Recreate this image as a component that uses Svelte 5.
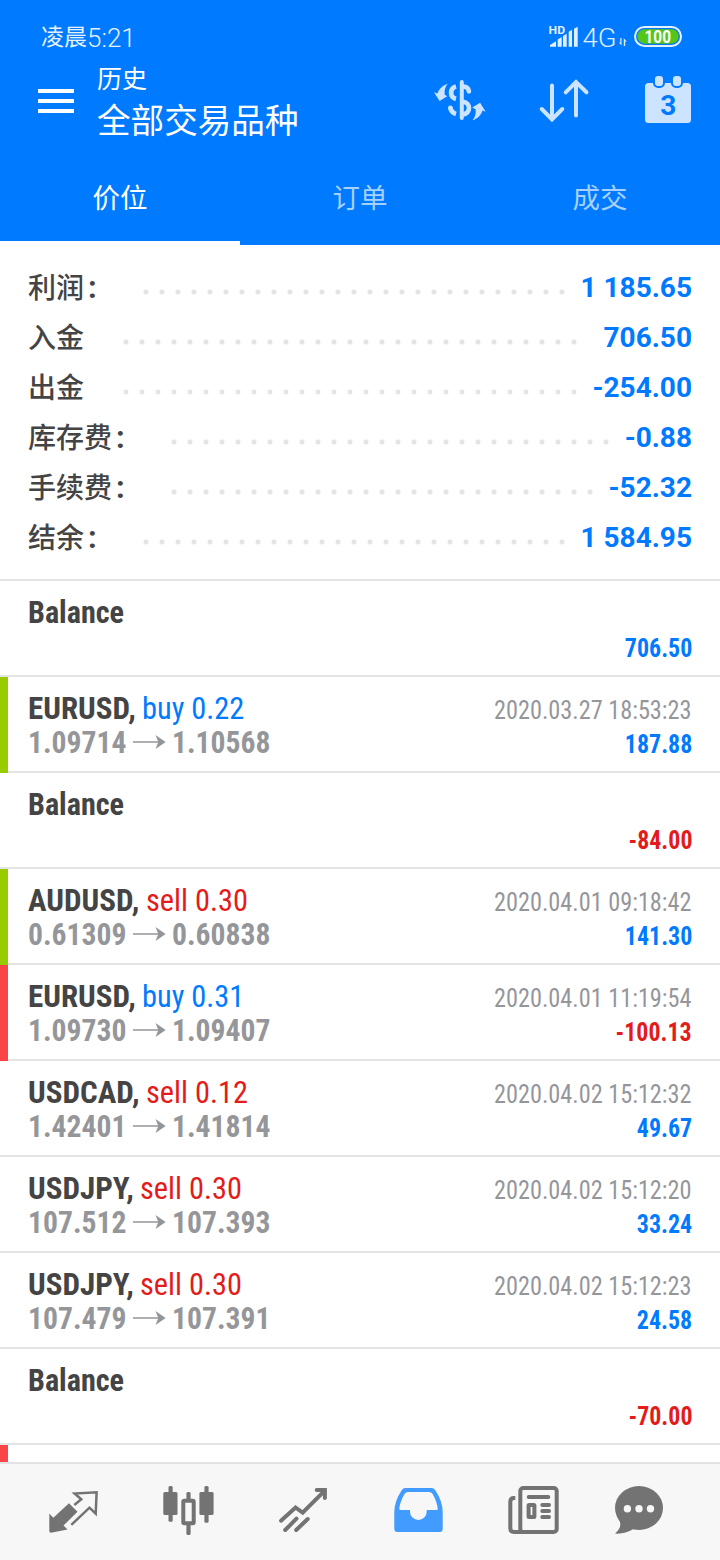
<script lang="ts">
  type Deal = {
    symbol: string;
    side?: "buy" | "sell";
    volume?: string;
    open?: string;
    close?: string;
    time?: string;
    profit: string;
    mark?: "green" | "red";
  };

  // start: left edge of the dotted leader, dots: how many dots it has
  const summary = [
    { label: "利润", colon: true, value: "1 185.65", start: 110.3, dots: 27 },
    { label: "入金", colon: false, value: "706.50", start: 89.5, dots: 29 },
    { label: "出金", colon: false, value: "-254.00", start: 89.5, dots: 29 },
    { label: "库存费", colon: true, value: "-0.88", start: 138.3, dots: 28 },
    { label: "手续费", colon: true, value: "-52.32", start: 138.3, dots: 27 },
    { label: "结余", colon: true, value: "1 584.95", start: 110.3, dots: 27 },
  ];

  const deals: Deal[] = [
    { symbol: "Balance", profit: "706.50" },
    { symbol: "EURUSD", side: "buy", volume: "0.22", open: "1.09714", close: "1.10568", time: "2020.03.27 18:53:23", profit: "187.88", mark: "green" },
    { symbol: "Balance", profit: "-84.00" },
    { symbol: "AUDUSD", side: "sell", volume: "0.30", open: "0.61309", close: "0.60838", time: "2020.04.01 09:18:42", profit: "141.30", mark: "green" },
    { symbol: "EURUSD", side: "buy", volume: "0.31", open: "1.09730", close: "1.09407", time: "2020.04.01 11:19:54", profit: "-100.13", mark: "red" },
    { symbol: "USDCAD", side: "sell", volume: "0.12", open: "1.42401", close: "1.41814", time: "2020.04.02 15:12:32", profit: "49.67" },
    { symbol: "USDJPY", side: "sell", volume: "0.30", open: "107.512", close: "107.393", time: "2020.04.02 15:12:20", profit: "33.24" },
    { symbol: "USDJPY", side: "sell", volume: "0.30", open: "107.479", close: "107.391", time: "2020.04.02 15:12:23", profit: "24.58" },
    { symbol: "Balance", profit: "-70.00" },
  ];

  const tabs = ["价位", "订单", "成交"];
  let active = $state(0);
</script>

<div class="screen">
  <header>
    <div class="status">
      <div class="clock">凌晨<span>5:21</span></div>
      <svg width="140" height="32" viewBox="0 0 140 32">
        <g fill="#e0efff">
          <text x="3.6" y="13.7" font-size="10.5" font-weight="700" textLength="16.5" lengthAdjust="spacingAndGlyphs">HD</text>
          <path d="M5 26.7V25l6-3.8v5.5zM12.7 26.7v-7.2l4-2.4v9.6zM18 26.7V16l3.7-2.2v12.9zM23.7 26.7V11.8L27 9.8v16.9zM29 26.7V8.7l3.7-2v20z" />
          <text x="37.6" y="26.6" font-size="25" font-weight="300" textLength="34" lengthAdjust="spacingAndGlyphs">4G</text>
          <path d="M76.5 18v7.6l-2.7-3h1.5V18zM78.8 26v-7.8l3 3.2h-1.6V26z" />
        </g>
        <rect x="90" y="7" width="46" height="19" rx="9.5" fill="none" stroke="#e5f1ff" stroke-width="2" />
        <rect x="92.3" y="9.3" width="41.4" height="14.4" rx="7.2" fill="#55c51a" />
        <text x="99.5" y="22.8" font-size="18" font-weight="700" fill="#fff" textLength="26.5" lengthAdjust="spacingAndGlyphs">100</text>
      </svg>
    </div>
    <div class="bar">
      <div class="menu"><i></i><i></i><i></i></div>
      <div class="titles">
        <div class="small">历史</div>
        <div class="big">全部交易品种</div>
      </div>
      <div class="actions">
        <svg width="60" height="56" viewBox="0 0 60 56">
          <g fill="none" stroke="#cce4ff" stroke-width="4.7">
            <path d="M31.8 10v36" stroke-width="4" stroke-linecap="round" />
            <path d="M26 14.5c-6.5 1.8-6.5 10.8 0 12.4" />
            <path d="M33 14.5c3.500.2 5.600 2.200 5.900 4.800" stroke-linecap="round" />
            <path d="M33 29.7c8 1.2 8 11.5 0 12.8" />
            <path d="M20.300 35.500c.6 3.300 2.700 5.600 5.700 6.500" />
          </g>
          <circle cx="20.4" cy="35.8" r="2.3" fill="#cce4ff" />
          <path fill="#cce4ff" d="M17.9 11.7c-2.8 2.8-3.7 6.6-3.2 11l2.6 1.5-7.7 4.8L4 20.3l3.5 1.2c1.5-4.6 5.3-8.3 10.4-9.8z" />
          <path fill="#cce4ff" d="M42.4 48.3c2.8-2.8 3.7-6.6 3.2-11L42.2 35.5l7.9-4.7 5.6 8.9-3.2-1.2c-1.5 4.8-5 8.3-10.1 9.8z" />
        </svg>
        <svg width="56" height="56" viewBox="0 0 56 56">
          <g fill="none" stroke="#cce4ff" stroke-width="4" stroke-linecap="round">
            <path d="M16 13.5V47M5.7 37 16 47.3 26.3 37" />
            <path d="M40 43.5V10M29.7 20.3 40 10l10.5 10.3" />
          </g>
        </svg>
        <svg width="56" height="56" viewBox="0 0 56 56">
          <rect x="5" y="11" width="46" height="40" rx="3.5" fill="#cce4ff" />
          <g fill="#cce4ff" stroke="#007aff" stroke-width="2">
            <rect x="14" y="3" width="10" height="12" rx="4" />
            <rect x="32" y="3" width="10" height="12" rx="4" />
          </g>
          <text x="28.3" y="42.5" font-size="28" font-weight="700" fill="#007aff" text-anchor="middle">3</text>
        </svg>
      </div>
    </div>
    <nav class="tabs">
      {#each tabs as tab, i}
        <button class:active={active === i} onclick={() => (active = i)}>{tab}</button>
      {/each}
    </nav>
  </header>

  <section class="summary">
    {#each summary as row}
      <div class="line">
        <span class="label" style="width: {row.start}px">{row.label}{#if row.colon}<b>:</b>{/if}</span>
        <span class="dots" style="width: {row.dots * 16}px"></span>
        <span class="value">{row.value}</span>
      </div>
    {/each}
  </section>

  <main>
    {#each deals as deal}
      <div class="deal {deal.mark ?? ''}">
        <div class="row">
          {#if deal.side}
            <div>
              <span class="symbol">{deal.symbol},</span>
              <span class={deal.side}>{deal.side} {deal.volume}</span>
            </div>
          {:else}
            <span class="symbol balance">{deal.symbol}</span>
          {/if}
          <span class="time">{deal.time ?? ""}</span>
        </div>
        <div class="row">
          <div class="prices">
            {#if deal.open}
              <span class="price">{deal.open}</span>
              <svg width="33" height="16" viewBox="0 0 33 16">
                <path d="M0 7.3h25L22.5.9 32.7 8l-10.2 7 2.5-6.3H0z" fill="#95969a" />
              </svg>
              <span class="price">{deal.close}</span>
            {:else}
              &nbsp;
            {/if}
          </div>
          <span class="profit" class:loss={deal.profit.startsWith("-")}>{deal.profit}</span>
        </div>
      </div>
    {/each}
    <div class="deal red"></div>
  </main>

  <footer>
    <svg width="56" height="56" viewBox="0 0 56 56">
      <path d="M3.3 31.5l4 4.3L23 21.2l8.5 8.6-14 13.8 4 3.9L5 50.8q-1.7 0-1.7-1.7z" fill="#737373" />
      <path d="M28.3 23l7-5.7-6.7-5.8 22-1.2-.9 21.4-6.2-6L25.3 42.8" fill="none" stroke="#737373" stroke-width="2.5" />
    </svg>
    <svg width="56" height="56" viewBox="0 0 56 56">
      <g fill="#737373">
        <rect x="2.3" y="10" width="14.2" height="23" rx="1.5" />
        <rect x="7.5" y="4" width="4.2" height="35.7" rx="1.5" />
        <rect x="38.4" y="10" width="14.2" height="23" rx="1.5" />
        <rect x="43.4" y="4" width="4.2" height="36.7" rx="1.5" />
        <rect x="25.4" y="10" width="4.2" height="9" rx="1.5" />
        <rect x="25.4" y="41" width="4.2" height="12" rx="1.5" />
      </g>
      <rect x="22.3" y="18.8" width="10.4" height="22.4" rx="1" fill="none" stroke="#737373" stroke-width="4" />
    </svg>
    <svg width="56" height="56" viewBox="0 0 56 56">
      <g fill="none" stroke="#737373" stroke-width="4" stroke-linecap="round">
        <path d="M5 38.7l14.5-13.2 7.2 5.2L48.5 8.8" />
        <path d="M40.7 8h8.2v8" />
        <path d="M9.2 48l11.3-11.3M20.2 48l11.5-11" />
      </g>
    </svg>
    <svg width="56" height="56" viewBox="0 0 56 56">
      <path
        fill="#429bff"
        fill-rule="evenodd"
        d="M14.5 6h26q2.5 0 3.8 2.2 7.4 11 7.4 22V47q0 3-3 3H6.3q-3 0-3-3V30.2q0-11 7.4-22Q12 6 14.5 6zM17 10q-2.3 0-3.3 1.7Q9 19.5 8.3 26.5 8.2 28 9.7 28H19v1.7a8.35 8.35 0 0 0 16.7 0V28h9.6q1.7 0 1.4-1.5Q46 19.5 41.5 11.7 40.4 10 38 10z"
      />
    </svg>
    <svg width="56" height="56" viewBox="0 0 56 56">
      <g fill="none" stroke="#737373" stroke-width="4">
        <rect x="14.3" y="6" width="36.4" height="44" rx="3" />
        <path d="M9.3 16H8q-3.7 0-3.7 3.7v26.6Q4.3 50 8 50h10" />
        <path d="M22.7 15h19.6M36.3 23h6.7M36.3 29h6.7M36.3 35h6.7" stroke-linecap="round" />
        <rect x="22.6" y="23" width="5.8" height="12" rx=".5" />
      </g>
    </svg>
    <svg width="56" height="56" viewBox="0 0 56 56">
      <ellipse cx="27" cy="26" rx="24" ry="22" fill="#737373" />
      <path d="M6.5 36.5q5 8-3.5 15Q12 52.5 21.5 47z" fill="#737373" />
      <g fill="#f7f7f7">
        <circle cx="15.4" cy="26.7" r="3.7" />
        <circle cx="27" cy="26.7" r="3.7" />
        <circle cx="38.5" cy="26.7" r="3.7" />
      </g>
    </svg>
  </footer>
</div>

<style>
  :global(body) {
    margin: 0;
  }
  .screen {
    display: flex;
    flex-direction: column;
    width: 720px;
    height: 1560px;
    overflow: hidden;
    background: #fff;
    font-family: Roboto, "Noto Sans CJK SC", sans-serif;
  }
  svg {
    display: block;
    flex: none;
  }

  /* header */
  header {
    display: flex;
    flex-direction: column;
    flex: none;
    height: 245px;
    background: #007aff;
    color: #fff;
  }
  .status {
    display: flex;
    justify-content: space-between;
    box-sizing: border-box;
    height: 62px;
    padding: 20px 35px 0 41px;
  }
  .clock {
    display: flex;
    padding-top: 1px;
    line-height: 34px;
    font-size: 23px;
    color: #e5f1ff;
  }
  .clock span {
    font-size: 26px;
    font-weight: 300;
  }
  .bar {
    display: flex;
    height: 91px;
    padding: 0 25px 0 38px;
  }
  .menu {
    display: flex;
    flex-direction: column;
    gap: 6px;
    width: 36px;
    padding-top: 27px;
  }
  .menu i {
    height: 4px;
    background: #fff;
  }
  .titles {
    flex: 1;
    padding: 1px 0 0 23px;
  }
  .small {
    font-size: 25px;
    line-height: 34px;
  }
  .big {
    font-size: 33.6px;
    line-height: 50px;
  }
  .actions {
    display: flex;
    gap: 48px;
    padding-top: 10px;
    margin-right: -1px;
  }
  .actions svg:first-child {
    margin-right: -2px;
  }
  .tabs {
    display: flex;
    flex: 1;
  }
  .tabs button {
    flex: 1;
    padding: 0 0 2px;
    border: 0;
    border-bottom: 4px solid transparent;
    background: none;
    font: 400 27.5px Roboto, "Noto Sans CJK SC", sans-serif;
    color: #a6d1ff;
  }
  .tabs .active {
    border-color: #fff;
    color: #fff;
  }

  /* totals */
  .summary {
    flex: none;
    padding: 18px 28px 16px;
    border-bottom: 2px solid #e4e4e4;
  }
  .line {
    display: flex;
    align-items: center;
    height: 50px;
    font-size: 28px;
    line-height: 50px;
  }
  .label {
    flex: none;
    padding-top: 1px;
    font-weight: 500;
    color: #444;
  }
  .label b {
    margin-left: 4px;
    font-size: 31px;
    line-height: 1;
  }
  .dots {
    flex: none;
    height: 6px;
    margin-top: 8px;
    background: radial-gradient(circle at center, #e4e4e4 2.2px, transparent 2.9px) 0 0 / 16px 6px;
  }
  .value {
    flex: 1;
    text-align: right;
    font-weight: 700;
    color: #007aff;
    white-space: nowrap;
  }

  /* deals */
  main {
    flex: 1;
    min-height: 0;
    overflow: hidden;
    font-family: "Roboto Condensed", Roboto, sans-serif;
    font-stretch: 75%;
  }
  .deal {
    box-sizing: border-box;
    height: 96px;
    padding: 14px 28px 0;
    border-bottom: 2px solid #e4e4e4;
  }
  .deal.green,
  .deal.red {
    padding-left: 20px;
    border-left: 8px solid #99cc00;
    border-image: linear-gradient(to right, #99cc00 8px, #e4e4e4 8px) 0 0 2 8;
  }
  .deal.red {
    border-image-source: linear-gradient(to right, #fb4446 8px, #e4e4e4 8px);
  }
  .row {
    display: flex;
    justify-content: space-between;
    align-items: baseline;
    height: 34px;
    font-size: 32px;
    line-height: 34px;
    white-space: nowrap;
  }
  .symbol,
  .buy,
  .sell,
  .price {
    display: inline-block;
    transform: scaleX(0.97);
    transform-origin: left;
  }
  .time,
  .profit {
    transform: scaleX(0.934);
    transform-origin: right;
  }
  .symbol {
    margin-right: -4.2px;
    font-weight: 700;
    color: #444;
  }
  .symbol.balance {
    transform: scaleX(0.942);
  }
  .buy,
  .sell {
    transform: scaleX(0.948);
    color: #007aff;
  }
  .sell {
    color: #e41b1b;
  }
  .time {
    font-size: 26px;
    color: #95969a;
  }
  .prices {
    display: flex;
    align-items: center;
    gap: 6.5px;
  }
  .price {
    margin-right: -8px;
    transform: scaleX(0.925);
    font-weight: 700;
    color: #95969a;
  }
  .profit {
    transform: scaleX(0.92);
    font-size: 26px;
    font-weight: 700;
    color: #007aff;
  }
  .loss {
    color: #e41b1b;
  }

  /* bottom bar */
  footer {
    display: flex;
    flex: none;
    gap: 59px;
    box-sizing: border-box;
    height: 98px;
    padding: 18px 0 0 46px;
    border-top: 2px solid #e2e2e2;
    background: #f7f7f7;
  }
  footer svg:last-child {
    margin-left: -9px;
  }
</style>
